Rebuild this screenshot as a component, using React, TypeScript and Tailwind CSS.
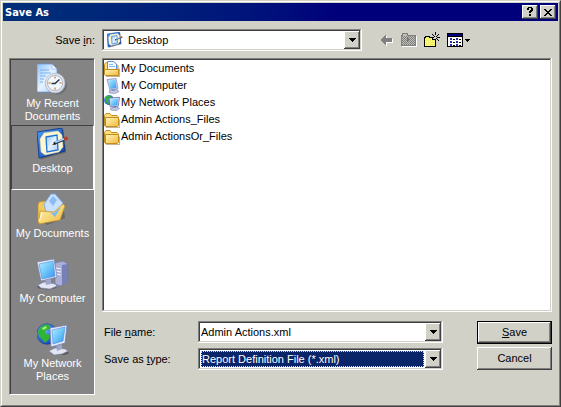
import React from 'react';

const sunken =
  'bg-white p-[2px] shadow-[inset_-1px_-1px_#fff,inset_1px_1px_#808080,inset_-2px_-2px_#d4d0c8,inset_2px_2px_#404040]';
const raised =
  'bg-[#d1d1c8] shadow-[inset_-1px_-1px_#404040,inset_1px_1px_#fff,inset_-2px_-2px_#808080]';

const Defs: React.FC = () => (
  <svg className="absolute h-0 w-0" aria-hidden="true">
    <defs>
      <linearGradient id="screen" x1="0" y1="0" x2="1" y2="1">
        <stop offset="0" stopColor="#b9ecff" />
        <stop offset="0.5" stopColor="#6cc6fb" />
        <stop offset="1" stopColor="#3c8df0" />
      </linearGradient>
      <linearGradient id="paper" x1="0" y1="0" x2="1" y2="1">
        <stop offset="0" stopColor="#8fc2fb" />
        <stop offset="0.5" stopColor="#e6f2ff" />
        <stop offset="1" stopColor="#a9cdfa" />
      </linearGradient>
      <linearGradient id="folder" x1="0" y1="0" x2="1" y2="1">
        <stop offset="0" stopColor="#fff6b8" />
        <stop offset="1" stopColor="#f0b93c" />
      </linearGradient>
      <linearGradient id="frame" x1="0" y1="0" x2="1" y2="1">
        <stop offset="0" stopColor="#4b9bf5" />
        <stop offset="1" stopColor="#0b3fa8" />
      </linearGradient>
      <radialGradient id="globe" cx="0.35" cy="0.3" r="0.8">
        <stop offset="0" stopColor="#6fb6ff" />
        <stop offset="1" stopColor="#0a3bb0" />
      </radialGradient>
    </defs>
  </svg>
);

const RecentIcon = () => (
  <svg className="h-8 w-8" viewBox="0 0 32 32" aria-hidden="true">
    <path d="M0 1h15l5 5v23H0z" fill="url(#paper)" stroke="#5f92de" strokeWidth="0.7" />
    <path d="M15 1v5h5z" fill="#f5faff" stroke="#6d9ce0" strokeWidth="0.5" />
    <path d="M3 7h9M3 10h11M3 13h6M3 16h4M3 19h3" stroke="#7db0f0" strokeWidth="1" />
    <ellipse cx="20" cy="22" rx="10" ry="9.5" fill="#505050" opacity="0.5" />
    <circle cx="18.5" cy="20.5" r="10.3" fill="#8b93a3" />
    <circle cx="18" cy="20" r="9.8" fill="#e3e3ea" stroke="#b9bdc9" strokeWidth="0.7" />
    <circle cx="18" cy="20" r="7.6" fill="#eff7ff" stroke="#8fa7c8" strokeWidth="0.7" />
    <path d="M18 13.500v2M18 24.500v2M11.500 20h2M22.500 20h2" stroke="#ee8a2c" strokeWidth="1.5" />
    <path d="M22.5 16.5L18 20.5h-3.5" fill="none" stroke="#263246" strokeWidth="1.5" />
  </svg>
);

const DesktopIcon: React.FC<{ className: string }> = ({ className }) => (
  <svg className={className} viewBox="0 0 32 32" aria-hidden="true">
    <path d="M2 4.500L26.500 1.500 29 24.500 3.500 31.500z" fill="#333" opacity="0.4" />
    <path d="M0 4L25 0l3 23L2 30z" fill="url(#frame)" stroke="#0a3488" strokeWidth="0.8" />
    <path d="M7 5l14-2 4 4 1 12-4 5-14 3-4-3-1-13z" fill="#fff5ce" stroke="#dcd6aa" strokeWidth="0.5" />
    <path d="M9 9l11-2 1 15-11 2z" fill="url(#paper)" stroke="#1c74d8" strokeWidth="1.3" />
    <path d="M17 15.500l10-4" stroke="#21324d" strokeWidth="2.600" />
    <path d="M18 14.500l9-3.600" stroke="#a9d2f8" strokeWidth="1.800" />
    <path d="M15 16.700l3-2.200.8 1.900z" fill="#111" />
    <circle cx="29" cy="10.500" r="2" fill="#c03a24" />
  </svg>
);

const DocumentsIcon = () => (
  <svg className="h-8 w-8" viewBox="0 0 32 32" aria-hidden="true">
    <path d="M3 13l1-3 5-2 3 2 14 1 2 14-18 7-7-5z" fill="#333" opacity="0.35" />
    <path d="M1 12l1-3 6-1 2 2 12 1-1 16-20 3z" fill="#f1c95c" stroke="#b98a26" strokeWidth="0.6" />
    <path d="M7 11l7-10h4l8 9-5 11-11 2z" fill="#c9e1ff" stroke="#73a4e4" strokeWidth="0.8" />
    <path d="M12 8l4-5 4 4-4 6z" fill="#8dbcf5" />
    <path d="M3 18l14 1 9-8 2 2-5 14-21 4z" fill="url(#folder)" stroke="#c79327" strokeWidth="0.8" />
    <path d="M13 19l4 1 7-6-6 10z" fill="#79b9f4" />
    <path d="M2 29l3-10" stroke="#fffbe0" strokeWidth="1" />
  </svg>
);

const ComputerIcon = () => (
  <svg className="h-8 w-8" viewBox="0 0 32 32" aria-hidden="true">
    <path d="M18 5l8-2 5 3v18l-8 4-5-2z" fill="#a9afd6" stroke="#6870a6" strokeWidth="0.6" />
    <path d="M25 7l6-1v18l-6 3z" fill="#7780b4" />
    <path d="M19 10l5 1M19 13l5 1M19 16l5 1" stroke="#f2f4ff" strokeWidth="1" />
    <ellipse cx="10" cy="29" rx="10" ry="2.500" fill="#444" opacity="0.5" />
    <path d="M1 27l6-3 11 2 2 2-7 3-9-1z" fill="#e4e6f4" stroke="#8289b5" strokeWidth="0.6" />
    <path d="M8 21l6-1v6l-5 1z" fill="#9ea6cc" />
    <path d="M0 4l17-3 3 18-16 4z" fill="#e8ecfa" stroke="#7480b2" strokeWidth="0.700" />
    <path d="M2 6l14-3 2 15-13 3z" fill="url(#screen)" stroke="#3b7fd2" strokeWidth="0.500" />
  </svg>
);

const NetworkIcon = () => (
  <svg className="h-8 w-8" viewBox="0 0 32 32" aria-hidden="true">
    <circle cx="10" cy="11" r="10.300" fill="url(#globe)" stroke="#0c328c" strokeWidth="0.500" />
    <path d="M3 5c3-4 7-4 10-3l-1 4-4 2 1 3 4 1-1 4-4 4-3-4-3-3-1-4z" fill="#2fb52f" />
    <path d="M5 5l4-2 1 2-4 2z" fill="#a8ee7a" />
    <ellipse cx="23" cy="30" rx="9" ry="2" fill="#333" opacity="0.5" />
    <path d="M12 28l6-3 10 1 3 2-6 3-8 1z" fill="#e4e6f4" stroke="#7e86b4" strokeWidth="0.600" />
    <path d="M19 21l6-1v6l-5 2z" fill="#9ea6cc" />
    <path d="M13 5l17-3-2 18-14 4z" fill="#e8ecfa" stroke="#6b78ae" strokeWidth="0.700" />
    <path d="M15 7l13-3-2 14-10 3z" fill="url(#screen)" stroke="#3b7fd2" strokeWidth="0.500" />
  </svg>
);

const SmallComputerIcon = () => (
  <svg className="h-4 w-4" viewBox="0 0 16 16" aria-hidden="true">
    <path d="M5 13l4-2 5 1 .5 2-4 1.500-5-.5z" fill="#c3c8e0" stroke="#7c84ae" strokeWidth="0.600" />
    <path d="M8 10h3v3H8z" fill="#9098c0" />
    <path d="M3 1.500L12 .5l2 10-8 1.500z" fill="#d5dcf2" stroke="#7480b2" strokeWidth="0.700" />
    <path d="M4.200 2.500l7-.8 1.400 8-6 1.200z" fill="url(#screen)" />
  </svg>
);

const SmallNetworkIcon = () => (
  <svg className="h-4 w-4" viewBox="0 0 16 16" aria-hidden="true">
    <circle cx="5" cy="5" r="5" fill="url(#globe)" />
    <path d="M1 3c1-2 4-3 6-2L6 4 3 5l2 3-1 2-2-3z" fill="#2fb52f" />
    <path d="M6 14l3-2 5 .5 1.500 1-3 2-5-.3z" fill="#c3c8e0" stroke="#7c84ae" strokeWidth="0.600" />
    <path d="M9 10h3v3H9z" fill="#9098c0" />
    <path d="M5 3l10.500-.7-1.300 9-8 .7z" fill="#d5dcf2" stroke="#52619c" strokeWidth="0.700" />
    <path d="M6.300 4.200l8-.6-1 6.700-6.200.6z" fill="url(#screen)" />
  </svg>
);

const FolderIcon: React.FC<{ paper?: boolean }> = ({ paper }) => (
  <svg className="h-4 w-4" viewBox="0 0 16 16" aria-hidden="true">
    <path d="M.5 13.500v-10l1.500-2h4l1.500 2h5.500l1 1v9z" fill="#fbe07c" stroke="#c28d1e" />
    {paper && (
      <>
        <path d="M3.500.5h6l3 2.500v7h-9z" fill="#f2f8ff" stroke="#5c92d8" />
        <path d="M5 3.500h4M5 5.500h6" stroke="#8bbcf2" />
      </>
    )}
    <path d={paper ? 'M.5 8.500h14v6h-13l-1-1z' : 'M1.500 5.500h13v8l-1 1h-12z'} fill="url(#folder)" stroke="#c28d1e" />
    <path d="M2 15.500h13.500v-8" fill="none" stroke="#8a6a22" strokeOpacity="0.5" />
  </svg>
);

const BackIcon = () => (
  <svg className="h-4 w-4" viewBox="0 0 16 16" shapeRendering="crispEdges" aria-hidden="true">
    <path d="M3 9l6-6v4h6v4H9v4z" fill="#fff" />
    <path d="M2 8l6-6v4h6v4H8v4z" fill="#808080" />
  </svg>
);

const UpIcon = () => (
  <svg className="h-4 w-4" viewBox="0 0 16 16" shapeRendering="crispEdges" aria-hidden="true">
    <path d="M1 14.500h14.500v-11" fill="none" stroke="#fff" />
    <path d="M.5 13.500v-10h1v-2h5v2h8v10z" fill="#bdbdb6" stroke="#808080" />
    <path d="M1 4.500h13M1 6.500h13M1 8.500h13M1 10.500h13M1 12.500h13" stroke="#808080" strokeDasharray="1 1" />
    <path d="M2 5.500h12M2 7.500h12M2 9.500h12M2 11.500h12" stroke="#808080" strokeDasharray="1 1" />
    <path d="M6 5h1v1h1v1h1v1H8v1H7v1H6z" fill="#757575" />
  </svg>
);

const NewFolderIcon = () => (
  <svg className="h-4 w-4" viewBox="0 0 16 16" shapeRendering="crispEdges" aria-hidden="true">
    <path d="M.5 14.500v-9h1v-1h4v1h6v9z" fill="#f4f06a" stroke="#000" />
    <path d="M1 7.500h10M1 9.500h10M1 11.500h10M1 13.500h10" stroke="#fffde0" strokeDasharray="1 1" />
    <path d="M8 5h4v3H8z" fill="#d1d1c8" />
    <path d="M8.500 5v3M9 7.500h2.500" stroke="#000" />
    <path d="M11 0h1v3h-1zM11 7h1v3h-1zM7 5h3v1H7zM13 5h3v1h-3zM9 3h1v1H9zM8 2h1v1H8zM13 3h1v1h-1zM14 2h1v1h-1zM13 7h1v1h-1zM14 8h1v1h-1zM10 4h1v1h-1zM12 4h1v1h-1zM12 6h1v1h-1z" fill="#000" />
  </svg>
);

const ViewsIcon = () => (
  <svg className="h-4 w-6" viewBox="0 0 24 16" shapeRendering="crispEdges" aria-hidden="true">
    <path d="M.5 1.500h15v13H.5z" fill="#fff" stroke="#000" />
    <path d="M1 2h14v2H1z" fill="#000080" />
    <path d="M1 4h14v1H1z" fill="#000" />
    <path d="M3 6h2v2H3zM3 9h2v2H3zM3 12h2v2H3zM9 6h2v2H9zM9 9h2v2H9zM9 12h2v2H9z" fill="#1f2fa0" />
    <path d="M6 7h2v1H6zM6 10h2v1H6zM6 13h2v1H6zM12 7h2v1h-2zM12 10h2v1h-2zM12 13h2v1h-2z" fill="#000" />
    <path d="M18 7h5v1h-1v1h-1v1h-1V9h-1V8h-1z" fill="#000" />
  </svg>
);

const Caret = () => (
  <svg className="h-1 w-[7px]" viewBox="0 0 7 4" shapeRendering="crispEdges" aria-hidden="true">
    <path d="M0 0h7v1H6v1H5v1H4v1H3V3H2V2H1V1H0z" fill="#000" />
  </svg>
);

const places = [
  { lines: ['My Recent', 'Documents'], icon: <RecentIcon /> },
  { lines: ['Desktop'], icon: <DesktopIcon className="h-8 w-8" />, active: true },
  { lines: ['My Documents'], icon: <DocumentsIcon /> },
  { lines: ['My Computer'], icon: <ComputerIcon /> },
  { lines: ['My Network', 'Places'], icon: <NetworkIcon /> },
];

const files = [
  { name: 'My Documents', icon: <FolderIcon paper /> },
  { name: 'My Computer', icon: <SmallComputerIcon /> },
  { name: 'My Network Places', icon: <SmallNetworkIcon /> },
  { name: 'Admin Actions_Files', icon: <FolderIcon /> },
  { name: 'Admin ActionsOr_Files', icon: <FolderIcon /> },
];

const App: React.FC = () => {
  return (
    <div className="flex min-h-screen flex-col border border-t-[#d1d1c8] border-l-[#d1d1c8] border-r-[#404040] border-b-[#404040] bg-[#d1d1c8] font-['Liberation_Sans',sans-serif] text-[11px] leading-[13px] text-black">
      <Defs />
      <div className="flex flex-1 flex-col border border-t-white border-l-white border-r-[#808080] border-b-[#808080] p-px">
        {/* Title bar */}
        <header className="flex h-[18px] items-center bg-linear-to-r from-[#003078] to-[#00007b] to-60% pr-[2px] pl-[2px]">
          <h1 className="flex-1 font-['DejaVu_Sans_Condensed','DejaVu_Sans',sans-serif] text-[11px] font-bold text-white">
            Save As
          </h1>
          <div className="flex gap-[2px]">
            <button type="button" aria-label="Help" className={`flex h-[14px] w-4 items-center justify-center ${raised}`}>
              <svg className="h-[10px] w-2" viewBox="0 0 8 10" shapeRendering="crispEdges" aria-hidden="true">
                <path d="M2 0h4v1h1v3H6v1H5v1H3V4h1V3h1V1H3v2H1V1h1zM3 7h2v2H3z" fill="#000" />
              </svg>
            </button>
            <button type="button" aria-label="Close" className={`flex h-[14px] w-4 items-center justify-center ${raised}`}>
              <svg className="h-[7px] w-2" viewBox="0 0 8 7" shapeRendering="crispEdges" aria-hidden="true">
                <path d="M0 0h2v1h1v1h2V1h1V0h2v1H7v1H6v1H5v1h1v1h1v1h1v1H6V6H5V5H3v1H2v1H0V6h1V5h1V4h1V3H2V2H1V1H0z" fill="#000" />
              </svg>
            </button>
          </div>
        </header>

        {/* Location row */}
        <div className="flex items-center gap-[7px] px-[6px] pt-2 pb-[7px]">
          <label htmlFor="location" className="w-[86px] text-right">
            Save <span className="underline">i</span>n:
          </label>
          <div className="flex flex-1 items-center">
            <div className={`relative flex h-[22px] flex-1 ${sunken}`}>
              <select id="location" className="h-full w-full appearance-none bg-white pl-6 outline-none">
                <option>Desktop</option>
              </select>
              <span className="pointer-events-none absolute top-[3px] left-[5px]">
                <DesktopIcon className="h-4 w-4" />
              </span>
              <span className={`pointer-events-none absolute top-[2px] right-[2px] bottom-[2px] flex w-4 items-center justify-center ${raised}`}>
                <Caret />
              </span>
            </div>
            <div className="flex w-[190px] gap-[7px] pl-4">
              <button type="button" aria-label="Back" disabled>
                <BackIcon />
              </button>
              <button type="button" aria-label="Up one level" disabled>
                <UpIcon />
              </button>
              <button type="button" aria-label="New folder">
                <NewFolderIcon />
              </button>
              <button type="button" aria-label="Views">
                <ViewsIcon />
              </button>
            </div>
          </div>
        </div>

        <div className="flex flex-1 gap-[7px] px-[6px]">
          {/* Places bar */}
          <nav className="mb-[9px] flex w-[86px] flex-col border border-t-[#808080] border-l-[#808080] border-r-white border-b-white bg-[#848484]">
            <div className="flex flex-1 flex-col border-t border-l border-[#404040]">
              {places.map((place) => (
                <button
                  key={place.lines[0]}
                  type="button"
                  className={`flex h-[65px] flex-col items-center border pt-[2px] text-white ${
                    place.active ? 'border-t-[#404040] border-l-[#404040] border-r-white border-b-white' : 'border-transparent'
                  }`}
                >
                  {place.icon}
                  <span className="mt-[2px] flex flex-col whitespace-nowrap">
                    {place.lines.map((line) => (
                      <span key={line}>{line}</span>
                    ))}
                  </span>
                </button>
              ))}
            </div>
          </nav>

          <div className="flex flex-1 flex-col pb-[34px]">
            {/* File list */}
            <ul className={`flex-1 ${sunken}`}>
              {files.map((file) => (
                <li key={file.name} className="flex h-[17px] items-center gap-px">
                  {file.icon}
                  <span>{file.name}</span>
                </li>
              ))}
            </ul>

            {/* File name and type */}
            <form className="mt-[9px] flex gap-[34px]" onSubmit={(e) => e.preventDefault()}>
              <div className="flex flex-1 flex-col gap-[5px]">
                <div className="flex items-center">
                  <label htmlFor="file-name" className="w-24 pl-[2px]">
                    File <span className="underline">n</span>ame:
                  </label>
                  <div className={`flex h-[22px] flex-1 ${sunken}`}>
                    <input
                      id="file-name"
                      type="text"
                      defaultValue="Admin Actions.xml"
                      className="w-0 flex-1 pl-px outline-none"
                    />
                    <button type="button" aria-label="Show file names" className={`flex w-4 items-center justify-center ${raised}`}>
                      <Caret />
                    </button>
                  </div>
                </div>
                <div className="flex items-center">
                  <label htmlFor="file-type" className="w-24 pl-[2px]">
                    Save as <span className="underline">t</span>ype:
                  </label>
                  <div className={`relative flex h-[22px] flex-1 ${sunken}`}>
                    <div className="mr-4 flex flex-1 p-px">
                      <select
                        id="file-type"
                        className="h-full w-full appearance-none border border-dotted border-[#f5db95] bg-[#0a246a] text-white outline-none"
                      >
                        <option>Report Definition File (*.xml)</option>
                      </select>
                    </div>
                    <span className={`pointer-events-none absolute top-[2px] right-[2px] bottom-[2px] flex w-4 items-center justify-center ${raised}`}>
                      <Caret />
                    </span>
                  </div>
                </div>
              </div>
              <div className="flex w-[75px] flex-col gap-[3px]">
                <button type="submit" className="h-[23px] border border-black bg-[#d1d1c8] shadow-[inset_-1px_-1px_#404040,inset_1px_1px_#fff,inset_-2px_-2px_#808080]">
                  <span className="underline">S</span>ave
                </button>
                <button type="button" className={`h-[23px] ${raised}`}>
                  Cancel
                </button>
              </div>
            </form>
          </div>
        </div>
      </div>
    </div>
  );
};

export default App;
